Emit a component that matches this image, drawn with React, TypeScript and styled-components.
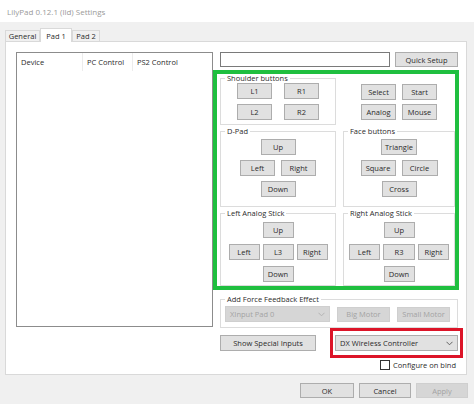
import styled, { createGlobalStyle } from "styled-components";

const GlobalStyle = createGlobalStyle`
  html, body {
    margin: 0;
    padding: 0;
    background: #f0f0f0;
  }
  body {
    font-family: "Open Sans", "Noto Sans", sans-serif;
    font-size: 7.5px;
    color: #2b2b2b;
  }
  * {
    box-sizing: border-box;
  }
`;

const columns = [
  { title: "Device", width: 66 },
  { title: "PC Control", width: 50 },
  { title: "PS2 Control", width: 79 },
];

function Chevron({ disabled }: { disabled?: boolean }) {
  return (
    <svg width="7" height="5" viewBox="0 0 7 5">
      <polyline
        points="0.5,0.8 3.5,3.8 6.5,0.8"
        fill="none"
        stroke={disabled ? "#b0b0b0" : "#555"}
        strokeWidth="0.9"
      />
    </svg>
  );
}

function App() {
  return (
    <Window>
      <GlobalStyle />
      <TitleBar>LilyPad 0.12.1 (lld) Settings</TitleBar>

      <TabStrip>
        <Tab $w={35}>General</Tab>
        <Tab $w={32} $active>
          Pad 1
        </Tab>
        <Tab $w={28}>Pad 2</Tab>
      </TabStrip>

      <TabPage>
        <ListView>
          <HeaderRow>
            {columns.map((col) => (
              <HeaderCell key={col.title} $w={col.width}>
                {col.title}
              </HeaderCell>
            ))}
          </HeaderRow>
        </ListView>

        <RightColumn>
          <TopRow>
            <TextField />
            <Button $w={63} $h={15}>
              Quick Setup
            </Button>
          </TopRow>

          <GreenFrame>
            <Group $h={51}>
              <Legend>Shoulder buttons</Legend>
              <GroupBody $pt={1} $gap={5}>
                <ButtonRow $gap={12}>
                  <Button $w={35}>L1</Button>
                  <Button $w={35}>R1</Button>
                </ButtonRow>
                <ButtonRow $gap={12}>
                  <Button $w={35}>L2</Button>
                  <Button $w={35}>R2</Button>
                </ButtonRow>
              </GroupBody>
            </Group>

            <LooseButtons>
              <ButtonRow $gap={6}>
                <Button $w={35}>Select</Button>
                <Button $w={35}>Start</Button>
              </ButtonRow>
              <ButtonRow $gap={6}>
                <Button $w={35}>Analog</Button>
                <Button $w={35}>Mouse</Button>
              </ButtonRow>
            </LooseButtons>

            <Group $h={80}>
              <Legend>D-Pad</Legend>
              <GroupBody $pt={4} $gap={5}>
                <Button $w={35}>Up</Button>
                <ButtonRow $gap={6}>
                  <Button $w={35}>Left</Button>
                  <Button $w={35}>Right</Button>
                </ButtonRow>
                <Button $w={35}>Down</Button>
              </GroupBody>
            </Group>

            <Group $h={80}>
              <Legend>Face buttons</Legend>
              <GroupBody $pt={4} $gap={5}>
                <Button $w={36}>Triangle</Button>
                <ButtonRow $gap={6}>
                  <Button $w={35}>Square</Button>
                  <Button $w={36}>Circle</Button>
                </ButtonRow>
                <Button $w={35}>Cross</Button>
              </GroupBody>
            </Group>

            <Group $h={77}>
              <Legend>Left Analog Stick</Legend>
              <GroupBody $pt={5} $gap={6}>
                <Button $w={31}>Up</Button>
                <ButtonRow $gap={3}>
                  <Button $w={31}>Left</Button>
                  <Button $w={31}>L3</Button>
                  <Button $w={31}>Right</Button>
                </ButtonRow>
                <Button $w={31}>Down</Button>
              </GroupBody>
            </Group>

            <Group $h={77}>
              <Legend>Right Analog Stick</Legend>
              <GroupBody $pt={5} $gap={6}>
                <Button $w={31}>Up</Button>
                <ButtonRow $gap={3}>
                  <Button $w={31}>Left</Button>
                  <Button $w={32}>R3</Button>
                  <Button $w={31}>Right</Button>
                </ButtonRow>
                <Button $w={31}>Down</Button>
              </GroupBody>
            </Group>
          </GreenFrame>

          <FeedbackGroup>
            <Legend>Add Force Feedback Effect</Legend>
            <FeedbackBody>
              <Combo $w={105} $disabled>
                <span>XInput Pad 0</span>
                <Chevron disabled />
              </Combo>
              <Button $w={53} $h={15} disabled>
                Big Motor
              </Button>
              <Button $w={53} $h={15} disabled>
                Small Motor
              </Button>
            </FeedbackBody>
          </FeedbackGroup>

          <BottomRow>
            <Button $w={96}>Show Special Inputs</Button>
            <RedFrame>
              <Combo>
                <span>DX Wireless Controller</span>
                <Chevron />
              </Combo>
            </RedFrame>
          </BottomRow>

          <CheckRow>
            <CheckBox />
            <span>Configure on bind</span>
          </CheckRow>
        </RightColumn>
      </TabPage>

      <Footer>
        <Button $w={54} $h={15}>
          OK
        </Button>
        <Button $w={52} $h={15}>
          Cancel
        </Button>
        <Button $w={52} $h={15} disabled>
          Apply
        </Button>
      </Footer>
    </Window>
  );
}

const Window = styled.div`
  width: 474px;
  height: 404px;
  display: flex;
  flex-direction: column;
  background: #f0f0f0;
  overflow: hidden;
`;

const TitleBar = styled.div`
  height: 22px;
  display: flex;
  align-items: center;
  padding-left: 7px;
  background: #fff;
  color: #9a9a9a;
  font-size: 8px;
`;

const TabStrip = styled.div`
  height: 19px;
  display: flex;
  align-items: flex-end;
  padding-left: 5px;
  position: relative;
  z-index: 1;
`;

const Tab = styled.div<{ $w: number; $active?: boolean }>`
  width: ${(p) => p.$w}px;
  height: ${(p) => (p.$active ? 14 : 11)}px;
  margin-bottom: ${(p) => (p.$active ? -1 : 0)}px;
  display: flex;
  align-items: center;
  justify-content: center;
  border: 1px solid #d9d9d9;
  border-bottom: none;
  background: ${(p) => (p.$active ? "#fff" : "#f0f0f0")};
`;

const TabPage = styled.div`
  width: 462px;
  height: 334px;
  margin-left: 5px;
  display: flex;
  align-items: flex-start;
  padding: 10px 0 0 10px;
  background: #fff;
  border: 1px solid #d9d9d9;
`;

const ListView = styled.div`
  width: 197px;
  height: 275px;
  border: 1px solid #8c8c8c;
  background: #fff;
`;

const HeaderRow = styled.div`
  height: 18px;
  display: flex;
`;

const HeaderCell = styled.div<{ $w: number }>`
  width: ${(p) => p.$w}px;
  display: flex;
  align-items: center;
  padding-left: 4px;
  border-right: 1px solid #ececec;

  &:last-child {
    border-right: none;
  }
`;

const RightColumn = styled.div`
  width: 250px;
  display: flex;
  flex-direction: column;
`;

const TopRow = styled.div`
  display: flex;
  gap: 5px;
  padding-left: 7px;
`;

const TextField = styled.div`
  width: 170px;
  height: 15px;
  background: #fff;
  border: 1px solid #7a7a7a;
`;

const Button = styled.button<{ $w: number; $h?: number }>`
  width: ${(p) => p.$w}px;
  height: ${(p) => p.$h ?? 16}px;
  flex: none;
  padding: 0;
  display: flex;
  align-items: center;
  justify-content: center;
  font-family: inherit;
  font-size: 7.5px;
  color: #2b2b2b;
  background: #e1e1e1;
  border: 1px solid #adadad;
  border-radius: 0;

  &:disabled {
    color: #a3a3a3;
    background: #d6d6d6;
    border-color: #cfcfcf;
  }
`;

const GreenFrame = styled.div`
  width: 246px;
  height: 220px;
  margin-top: 3px;
  display: grid;
  grid-template-columns: 116px 112px;
  grid-auto-rows: auto;
  align-content: start;
  column-gap: 7px;
  row-gap: 2px;
  padding-left: 3px;
  border: 4px solid #1fbf3f;
`;

const Group = styled.fieldset<{ $h: number }>`
  height: ${(p) => p.$h}px;
  margin: 0;
  padding: 0;
  min-width: 0;
  border: 1px solid #dcdcdc;
`;

const Legend = styled.legend`
  margin-left: 4px;
  padding: 0 2px;
  line-height: 8px;
  font-size: 7.5px;
`;

const GroupBody = styled.div<{ $pt: number; $gap: number }>`
  display: flex;
  flex-direction: column;
  align-items: center;
  gap: ${(p) => p.$gap}px;
  padding-top: ${(p) => p.$pt}px;
`;

const ButtonRow = styled.div<{ $gap: number }>`
  display: flex;
  justify-content: center;
  gap: ${(p) => p.$gap}px;
`;

const LooseButtons = styled.div`
  display: flex;
  flex-direction: column;
  gap: 4px;
  padding-top: 10px;
`;

const FeedbackGroup = styled.fieldset`
  width: 238px;
  height: 33px;
  margin: 5px 0 0 7px;
  padding: 0;
  min-width: 0;
  border: 1px solid #dcdcdc;
`;

const FeedbackBody = styled.div`
  display: flex;
  align-items: center;
  gap: 7px;
  padding: 3px 0 0 4px;
`;

const Combo = styled.div<{ $w?: number; $disabled?: boolean }>`
  width: ${(p) => (p.$w ? `${p.$w}px` : "100%")};
  height: 16px;
  display: flex;
  align-items: center;
  justify-content: space-between;
  padding: 0 4px 0 4px;
  color: ${(p) => (p.$disabled ? "#a3a3a3" : "#2b2b2b")};
  background: ${(p) => (p.$disabled ? "#d6d6d6" : "#e1e1e1")};
  border: 1px solid ${(p) => (p.$disabled ? "#cfcfcf" : "#adadad")};
`;

const BottomRow = styled.div`
  height: 30px;
  display: flex;
  align-items: center;
  margin-left: 7px;
`;

const RedFrame = styled.div`
  width: 133px;
  height: 30px;
  margin-left: 14px;
  display: flex;
  align-items: center;
  padding: 0 2px;
  border: 3px solid #dc1428;
`;

const CheckRow = styled.div`
  height: 11px;
  margin-top: 1px;
  display: flex;
  align-items: center;
  justify-content: flex-end;
  gap: 3px;
  padding-right: 7px;
`;

const CheckBox = styled.span`
  width: 10px;
  height: 10px;
  background: #fff;
  border: 1px solid #333;
`;

const Footer = styled.div`
  flex: 1;
  display: flex;
  justify-content: flex-end;
  align-items: flex-start;
  gap: 5px;
  padding: 8px 6px 0 0;
`;

export default App;
